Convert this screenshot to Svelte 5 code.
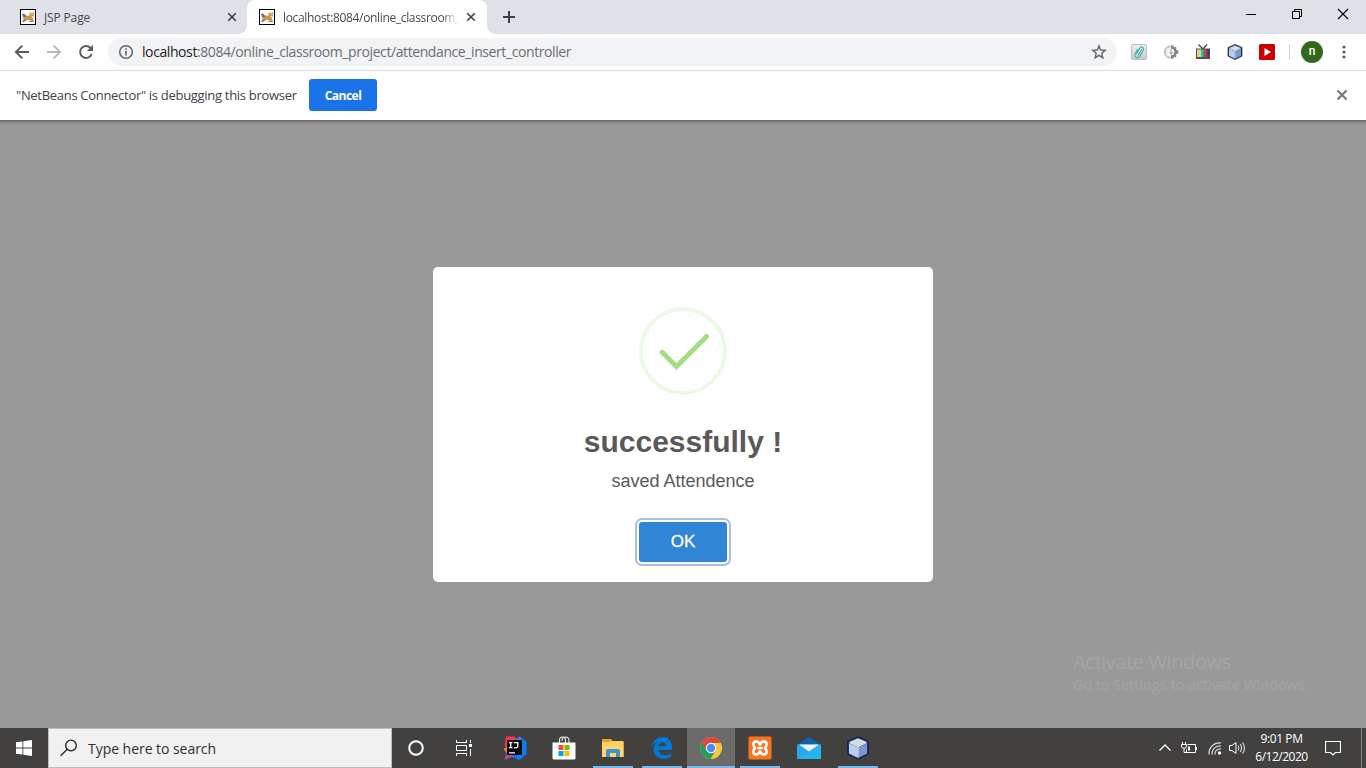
<script>
  const pins = [
    { id: 'idea', open: false },
    { id: 'store', open: false },
    { id: 'folder', open: true },
    { id: 'edge', open: true },
    { id: 'chrome', open: true, active: true },
    { id: 'xampp', open: true },
    { id: 'mail', open: false },
    { id: 'cube', open: true }
  ];
</script>

{#snippet tomcat()}
  <svg class="fav" width="16" height="16" viewBox="0 0 16 16">
    <rect x=".5" y=".5" width="15" height="15" fill="#fff" stroke="#000" />
    <path d="M5 8.500l3-1.500 1.500-1V3l1.500 1h1.500L14 3v4l-1.500 1.500L14 12.500h-2.500L9 11l-3 .5-3.500 1.500L4 10z" fill="#c99a45" />
    <path d="M2 5l2-.5 2 2L8 7 5 8.500 3 8M2 13l2-3 2 1.500-1.500 1z" fill="#77706a" />
    <path d="M2.500 9.500L5 8M9 12.500h5" stroke="#7c756e" stroke-width=".8" />
    <path d="M10.500 5.500h1M12.500 5.500h1M11.500 7.500h1.500" stroke="#fff1c0" stroke-width=".8" />
  </svg>
{/snippet}

{#snippet cross(size, weight)}
  <svg width={size} height={size} viewBox="0 0 10 10"><path d="M1.200 1.200l7.600 7.600M8.800 1.200L1.200 8.800" stroke="currentColor" stroke-width={weight} /></svg>
{/snippet}

{#snippet cube(size)}
  <svg width={size} height={size} viewBox="0 0 24 24">
    <path d="M12 .7l10.500 4.500v13L12 23.300 1.500 18.200v-13z" fill="#24306b" stroke="#1b234f" stroke-linejoin="round" />
    <path d="M12 2.300l8.700 3.700L12 10 3.300 6z" fill="#cfe0e0" />
    <path d="M3 7.300l8.500 3.900v10.500L3 17.500z" fill="#b8cfed" />
    <path d="M21 7.300l-8.500 3.900v10.500l8.500-4.200z" fill="#7b9aca" />
    <path d="M3.500 6.500L12 10.500l8.500-4M12 10.500v11" fill="none" stroke="#f0f7ff" stroke-width="1.200" />
  </svg>
{/snippet}

<div class="screen">
  <header class="tabs">
    <div class="tab idle">{@render tomcat()}<span class="name">JSP Page</span><i class="x">{@render cross(10, 1.6)}</i></div>
    <div class="tab current">{@render tomcat()}<span class="name long">localhost:8084/online_classroom_</span><i class="x">{@render cross(10, 1.6)}</i></div>
    <svg class="plus" width="12" height="12" viewBox="0 0 12 12"><path d="M6 0v12M0 6h12" stroke="#3c4043" stroke-width="2" /></svg>
    <div class="controls">
      <svg width="46" height="30" viewBox="0 0 46 30"><path d="M18 14.500h10" stroke="#000" /></svg>
      <svg width="46" height="30" viewBox="0 0 46 30"><path d="M18.500 11.500h7v7h-7zM20.500 11.500v-2h7v7h-2" fill="none" stroke="#000" /></svg>
      <svg width="46" height="30" viewBox="0 0 46 30"><path d="M18 9l10 10M28 9L18 19" stroke="#000" stroke-width="1.100" /></svg>
    </div>
  </header>

  <div class="toolbar">
    <svg class="nav" width="16" height="16" viewBox="0 0 16 16"><path d="M15 8H2.200M8.300 1.600L1.900 8l6.400 6.400" fill="none" stroke="#5a5e62" stroke-width="2" /></svg>
    <svg class="nav" width="16" height="16" viewBox="0 0 16 16"><path d="M1 8h12.800M7.700 1.600L14.100 8l-6.400 6.400" fill="none" stroke="#bababa" stroke-width="2" /></svg>
    <svg class="nav" width="16" height="16" viewBox="0 0 16 16"><path d="M13.700 10.200A6 6 0 1 1 12.400 3.800L14 5.400" fill="none" stroke="#5a5e62" stroke-width="2" /><path d="M15 .8v6.200H8.800z" fill="#5a5e62" /></svg>
    <div class="omni">
      <svg width="16" height="16" viewBox="0 0 16 16"><circle cx="8" cy="8" r="6.300" fill="none" stroke="#5f6368" stroke-width="1.500" /><path d="M8 7v4.500M8 4.300v1.600" stroke="#5f6368" stroke-width="1.600" /></svg>
      <span class="url"><b>localhost</b>:8084/online_classroom_project/attendance_insert_controller</span>
      <svg class="star" width="16" height="16" viewBox="0 0 16 16"><path d="M8 1.900l1.700 4.100 4.500.4-3.400 2.900 1 4.400L8 11.400l-3.800 2.300 1-4.400-3.400-2.900 4.500-.4z" fill="none" stroke="#5f6368" stroke-width="1.400" /></svg>
    </div>
    <div class="exts">
      <svg width="16" height="16" viewBox="0 0 16 16"><defs><linearGradient id="clip" x2="0" y2="1"><stop stop-color="#f3eff0" /><stop offset="1" stop-color="#ccc8ca" /></linearGradient></defs><rect x=".5" y=".5" width="15" height="15" rx="1.500" fill="url(#clip)" stroke="#bbb" /><path d="M5.500 9.500L8.800 4C10 2 13.500 3.300 12.300 6L8.900 12.200C7.300 15 2.800 13.300 4 10.200L6.500 5.500M10.500 5.500L7.300 11" fill="none" stroke="#2ac0a9" stroke-width="1.200" stroke-linecap="round" /></svg>
      <svg width="16" height="16" viewBox="0 0 16 16"><path d="M7.500 1.200a6.800 6.800 0 0 0 0 13.600z" fill="#c4c4c4" /><path d="M7.500 3.500a4.500 4.500 0 0 0 0 9z" fill="#f7f7f7" /><path d="M3.500 3.500Q6 8 3.500 12.500" stroke="#eee" fill="none" /><path d="M8 1.200l2.400.4.400 1.800 1.600-.7 1.300 1.400-.8 1.700 2.500.8v2.800l-2.500.8.800 1.700-1.300 1.500-1.600-.7-.4 1.700-2.400.5z" fill="#858585" /><circle cx="8" cy="8" r="3.300" fill="#f7f7f7" /><path d="M8 5.300v4.500M6.200 8.200L8 10.200l1.800-2" stroke="#999" fill="none" /></svg>
      <svg width="16" height="16" viewBox="0 0 16 16"><path d="M8 5L3.500.5M8 5L12 .5" stroke="#444" stroke-width="1.300" /><path d="M1 4.500h14V15H1z" fill="#555149" /><path d="M2 5.500h2V13H2z" fill="#cfcfc8" /><path d="M4 5.500h2V13H4z" fill="#f5d72e" /><path d="M6 5.500h2V13H6z" fill="#23c1d6" /><path d="M8 5.500h1.600V13H8z" fill="#1fb332" /><path d="M9.600 5.500h1.600V13H9.600z" fill="#e323b4" /><path d="M11.200 5.500h1.500V13h-1.500z" fill="#e42424" /><path d="M12.700 5.500H14V13h-1.300z" fill="#2736a4" /></svg>
      {@render cube(16)}
      <svg width="16" height="16" viewBox="0 0 16 16"><rect width="16" height="16" rx="1.500" fill="#c00" /><path d="M5.500 4l6.500 4-6.500 4z" fill="#fff" /></svg>
    </div>
    <span class="rule"></span>
    <span class="avatar">n</span>
    <svg class="dots" width="4" height="14" viewBox="0 0 4 14"><g fill="#5f6368"><circle cx="2" cy="2" r="1.600" /><circle cx="2" cy="7" r="1.600" /><circle cx="2" cy="12" r="1.600" /></g></svg>
  </div>

  <div class="infobar">
    <span class="info">"NetBeans Connector" is debugging this browser</span>
    <button class="cancel">Cancel</button>
    <i class="dismiss">{@render cross(12, 1.7)}</i>
  </div>

  <main class="page">
    <section class="modal">
      <svg class="check" width="88" height="88" viewBox="0 0 88 88"><circle cx="44" cy="44" r="42" fill="none" stroke="#edf8e7" stroke-width="4" /><path d="M23.200 45.200L37.500 59.500 67.500 29.500" fill="none" stroke="#a5dc86" stroke-width="5" stroke-linecap="round" /></svg>
      <h2>successfully !</h2>
      <p>saved Attendence</p>
      <button class="ok">OK</button>
    </section>
    <div class="watermark"><span class="w1">Activate Windows</span><span class="w2">Go to Settings to activate Windows.</span></div>
  </main>

  <footer class="taskbar">
    <div class="start"><svg width="16" height="16" viewBox="0 0 16 16"><path d="M0 2.300L6.500 1.400V7.600H0zM7.300 1.300L16 0v7.600H7.300zM0 8.400h6.500v6.200L0 13.700zM7.300 8.400H16V16l-8.700-1.300z" fill="#fff" /></svg></div>
    <div class="search">
      <svg width="18" height="18" viewBox="0 0 18 18"><circle cx="11" cy="6.500" r="5.300" fill="none" stroke="#222" stroke-width="1.300" /><path d="M7.200 10.300L.7 16.700" stroke="#222" stroke-width="1.300" /></svg>
      <span>Type here to search</span>
    </div>
    <div class="task"><svg width="16" height="16" viewBox="0 0 16 16"><circle cx="8" cy="8" r="6.800" fill="none" stroke="#fff" stroke-width="2" /></svg></div>
    <div class="task"><svg width="18" height="16" viewBox="0 0 18 16"><path d="M1.500 0v2.500h10V0M1.500 16v-2.500h10V16M1.500 5.500h10v5h-10zM15.500 0v3M15.500 9v7" fill="none" stroke="#fff" /><path d="M14 4h3v3h-3z" fill="#fff" /></svg></div>
    <div class="pins">
      {#each pins as pin}
        <div class="pin" class:open={pin.open} class:active={pin.active}>
          {#if pin.id === 'idea'}
            <svg width="24" height="24" viewBox="0 0 24 24"><path d="M3 .5h9l3 6-6 9-7.500-6z" fill="#fb315b" /><path d="M11 4l6-3.500 6.500 5V18l-7 6-8-3z" fill="#087cfa" /><path d="M13 4l4-3.500 2 5z" fill="#8770d8" /><path d="M.5 13l4-3 3 6-4 1z" fill="#f6821e" /><path d="M3.500 15l5 3 3 2-10 4z" fill="#a54fa0" /><rect x="4" y="4" width="15" height="15" fill="#080808" /><path d="M6 6.700h3.500M7.700 6.700v5M6 11.700h3.500M11 6.700h3.800v3.600q0 1.500-2 1.500H11M6 16.800h6" fill="none" stroke="#fff" stroke-width="1.300" /></svg>
          {:else if pin.id === 'store'}
            <svg width="24" height="24" viewBox="0 0 24 24"><path d="M7.500 7V4q0-3 3-3t3 3v3M10 5q0-4 3.500-4T17 5v2" fill="none" stroke="#eee" stroke-width="1.100" /><path d="M.5 6.500h23V22q0 1.500-1.500 1.500H2Q.5 23.500.5 22z" fill="#fff" /><path d="M6.500 9h5v5h-5z" fill="#f25022" /><path d="M12.500 9h5v5h-5z" fill="#7fba00" /><path d="M6.500 15h5v5h-5z" fill="#00a4ef" /><path d="M12.500 15h5v5h-5z" fill="#ffb900" /></svg>
          {:else if pin.id === 'folder'}
            <svg width="24" height="24" viewBox="0 0 24 24"><path d="M1 3h9l1 2h11.500v16H1z" fill="#f9cb4d" /><path d="M1 3h8.500v3H1z" fill="#e6a31c" /><path d="M1 6h21.500v15H1z" fill="#ffd569" /><path d="M5 21v-6q0-2 2-2h10q2 0 2 2v6h-4v-4H9v4z" fill="#3b93d6" /></svg>
          {:else if pin.id === 'edge'}
            <svg width="24" height="24" viewBox="0 0 24 24"><path d="M2 10.500C3.500 4.200 7.500 1 12.500 1 19 1 22 6 22 11.500V14H8.700c.2 6 8 6.200 12.300 3.600V21c-7 4-17 1.500-17.500-7.700 0-4 2.200-6.500 5.200-7.900C5.500 6 3.800 8 2 10.500zM8.800 10.200h7.100c0-5.700-6.900-5-7.100 0z" fill="#0078d7" /></svg>
          {:else if pin.id === 'chrome'}
            <svg width="24" height="24" viewBox="0 0 24 24"><circle cx="12" cy="12" r="11" fill="#fbc63d" /><path d="M12 12L2.500 6.500A11 11 0 0 0 11.600 23l5-8.500z" fill="#1fa05a" /><path d="M12 7h9.800A11 11 0 0 0 2.500 6.500l5 8z" fill="#db4a3c" /><circle cx="12" cy="12" r="5.200" fill="#fff" /><circle cx="12" cy="12" r="4.200" fill="#4c8bf5" /></svg>
          {:else if pin.id === 'xampp'}
            <svg width="24" height="24" viewBox="0 0 24 24"><rect x=".5" y=".5" width="23" height="23" rx="2" fill="#f37623" stroke="#b75520" /><path d="M12 8.600C11 5 5.500 4.500 5.300 8c-.1 2 .7 2.500 1.800 4-1.100 1.500-1.900 2-1.800 4 .2 3.500 5.700 3 6.700-.6 1 3.600 6.500 4.100 6.700.6.100-2-.7-2.500-1.800-4 1.100-1.500 1.900-2 1.800-4C18.500 4.500 13 5 12 8.600zM9.500 12h5" fill="none" stroke="#fff" stroke-width="2.600" stroke-linejoin="round" /></svg>
          {:else if pin.id === 'mail'}
            <svg width="24" height="24" viewBox="0 0 24 24"><path d="M0 9L12 1l12 8v3H0z" fill="#0863b3" /><path d="M0 8.500h24V23H0z" fill="#28a7ea" /><path d="M24 8.500V23H2z" fill="#22b5f0" /><path d="M2 8.500h20L12 15.500z" fill="#f3f4f5" /></svg>
          {:else}
            {@render cube(24)}
          {/if}
        </div>
      {/each}
    </div>
    <div class="tray">
      <svg width="12" height="16" viewBox="0 0 12 16"><path d="M.5 10.500L6 5l5.500 5.500" fill="none" stroke="#fff" stroke-width="1.400" /></svg>
      <svg class="bat" width="16" height="16" viewBox="0 0 16 16"><path d="M6.500 4.500h8v8h-9v-3M15.500 7v3M.5 4.500h5v1.800q0 2-2.500 2T.5 6.300zM1.500 2v2.500M4.500 2v2.500M3 8.500v4h3" fill="none" stroke="#fff" /><path d="M7 6.500h2v4H7z" fill="#fff" /></svg>
      <svg class="wifi" width="14" height="16" viewBox="0 0 14 16"><g fill="none" stroke="#ddd" stroke-width="1.200"><path d="M1 14.500C.5 8 5 2.500 13 3" /><path d="M4 14.500C3.500 10 7 5.500 13 6" /><path d="M7 14.500C6.500 11.500 9 8.500 13 9" /></g><circle cx="11.500" cy="13" r="1.700" fill="#fff" /></svg>
      <svg class="vol" width="17" height="16" viewBox="0 0 17 16"><path d="M.5 5.500h2.500L7 2.500v11L3 10.500H.5z" fill="none" stroke="#fff" /><path d="M9 5.500q1.500 2.500 0 5M11.200 4q2.800 4 0 8M13.500 2.500q4 5.500 0 11" fill="none" stroke="#ddd" stroke-width="1.100" /></svg>
      <div class="clock"><span class="time">9:01 PM</span><span class="date">6/12/2020</span></div>
      <svg class="action" width="16" height="16" viewBox="0 0 16 16"><path d="M.5 1.500h15v11h-5L8 15l-2.500-2.500h-5z" fill="none" stroke="#fff" stroke-width="1.200" /></svg>
      <span class="peek"></span>
    </div>
  </footer>
</div>

<style>
  .screen { width: 1366px; height: 768px; overflow: hidden; display: flex; flex-direction: column; background: #999; font-family: "Open Sans", "Noto Sans", sans-serif; }
  .screen * { box-sizing: border-box; }
  svg { display: block; flex: none; }
  span { white-space: nowrap; }
  .tabs { height: 34px; flex: none; display: flex; background: #dee1e6; }
  .tab { height: 34px; display: flex; align-items: center; color: #45494d; font-size: 12px; position: relative; }
  .idle { width: 247px; padding: 0 10px 0 20px; }
  .current { width: 240px; padding: 0 11px 0 12px; background: #fff; border-radius: 8px 8px 0 0; }
  .current::before, .current::after { content: ""; position: absolute; bottom: 0; width: 8px; height: 8px; }
  .current::before { left: -8px; background: radial-gradient(circle at 0 0, transparent 7.500px, #fff 8px); }
  .current::after { right: -8px; background: radial-gradient(circle at 100% 0, transparent 7.500px, #fff 8px); }
  .name { margin-left: 8px; letter-spacing: -0.15px; }
  .long { width: 176px; overflow: hidden; letter-spacing: -0.34px; mask-image: linear-gradient(90deg, #000 90%, transparent); }
  .x { margin-left: auto; color: #3c4043; }
  .plus { margin: 11px 0 0 16px; }
  .controls { margin-left: auto; display: flex; }
  .toolbar { height: 37px; flex: none; display: flex; align-items: center; background: #fff; border-bottom: 1px solid #d9dadc; padding-left: 14px; }
  .nav { margin-right: 16px; }
  .nav:nth-child(3) { margin-right: 14px; }
  .omni { width: 1009px; height: 28px; border-radius: 14px; background: #f1f3f4; display: flex; align-items: center; padding: 0 10px; }
  .url { margin-left: 8px; padding-bottom: 1px; font-size: 14px; color: #6a6e73; letter-spacing: -0.41px; }
  .url b { color: #202124; font-weight: 400; }
  .star { margin-left: auto; }
  .exts { display: flex; gap: 16px; margin-left: 14px; }
  .rule { width: 1px; height: 16px; margin-left: 14px; background: #d0d2d5; }
  .avatar { width: 22px; height: 22px; margin-left: 11px; border-radius: 50%; background: #33691e; color: #fff; text-align: center; font: 500 12px/21px Roboto, sans-serif; }
  .dots { margin-left: 19px; }
  .infobar { height: 49px; flex: none; display: flex; align-items: center; background: #fff; padding: 0 18px 1px 16px; }
  .info { width: 293px; font-size: 13px; color: #3f4246; letter-spacing: -0.3px; }
  .cancel { width: 68px; height: 32px; border: 0; border-radius: 3px; background: #1a73e8; color: #fff; padding: 0; font: 700 12px "Open Sans", sans-serif; letter-spacing: -0.5px; }
  .dismiss { margin-left: auto; color: #74777b; }
  .page { flex: 1; display: flex; flex-direction: column; align-items: center; padding-top: 147px; position: relative; background: linear-gradient(#606060 0, #858585 2px, #939393 4px, #999 6px); }
  .modal { width: 500px; height: 315px; border-radius: 5px; background: #fff; display: flex; flex-direction: column; align-items: center; padding-top: 40px; color: #595959; font-family: "Liberation Sans", Arial, sans-serif; }
  h2 { margin: 29px 0 0; font-size: 30px; line-height: 36px; }
  p { margin: 11px 0 0; font-size: 18px; line-height: 21px; }
  .ok { width: 88px; height: 40px; margin-top: 30px; border: 0; border-radius: 3px; background: #3085d6; color: #fff; font: 17px "Liberation Sans", sans-serif; -webkit-text-stroke: .3px #fff; box-shadow: 0 0 0 2px #fff, 0 0 0 4px rgba(50, 100, 150, .4); }
  .watermark { position: absolute; left: 1073px; top: 528px; display: flex; flex-direction: column; color: #a5a5a5; }
  .w1 { font-size: 20px; line-height: 28px; letter-spacing: -0.4px; }
  .w2 { font-size: 14px; line-height: 18px; letter-spacing: .17px; }
  .taskbar { height: 40px; flex: none; display: flex; background: #424140; }
  .start, .task, .pin { width: 48px; height: 40px; display: flex; align-items: center; justify-content: center; }
  .search { width: 344px; border: 1px solid #bdbdbd; background: #f1f1f1; display: flex; align-items: center; padding-left: 11px; color: #303030; font-size: 14px; letter-spacing: -0.04px; }
  .search span { margin-left: 10px; }
  .pins { display: flex; gap: 1px; margin-left: 3px; }
  .pin { position: relative; }
  .open::after { content: ""; position: absolute; bottom: 0; left: 4px; width: 40px; height: 2px; background: #76b9ed; }
  .active { background: #6b6b6a; }
  .active::after { left: 0; width: 48px; }
  .tray { margin-left: auto; display: flex; align-items: center; color: #fff; }
  .bat { margin-left: 10px; }
  .wifi { margin-left: 11px; }
  .vol { margin-left: 7px; }
  .clock { width: 71px; margin-left: 0; display: flex; flex-direction: column; align-items: center; font-size: 12px; line-height: 18px; padding-bottom: 1px; }
  .time { letter-spacing: -0.4px; }
  .date { letter-spacing: -0.5px; }
  .action { margin-left: 8px; }
  .peek { width: 1px; height: 40px; margin: 0 4px 0 20px; background: #858585; }
</style>
